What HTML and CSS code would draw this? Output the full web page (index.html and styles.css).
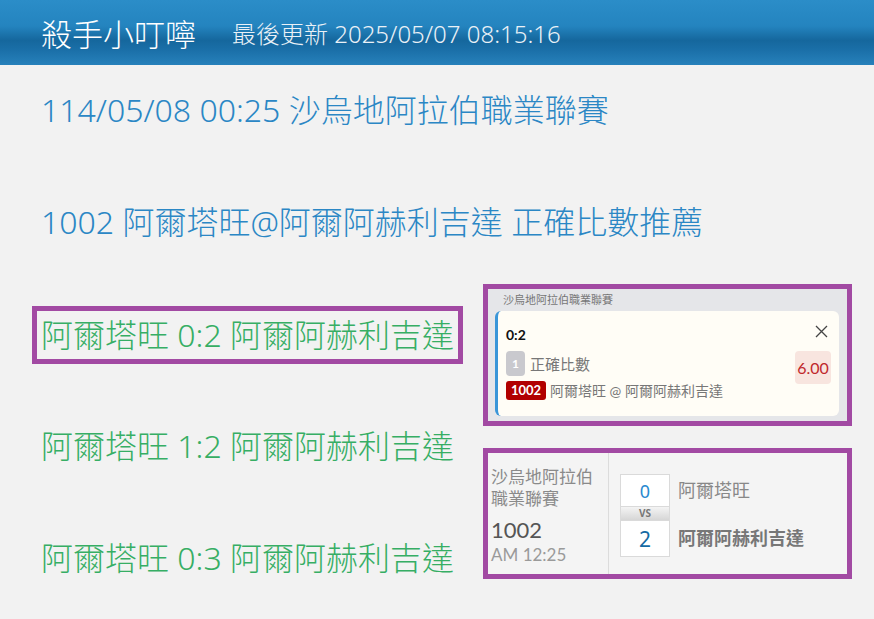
FILE: index.html
```html
<!DOCTYPE html>
<html lang="zh-Hant">
<head>
  <meta charset="UTF-8" />
  <meta name="viewport" content="width=device-width, initial-scale=1.0"/>
  <title>殺手小叮嚀</title>
  <link rel="stylesheet" href="styles.css">
</head>
<body>

<div class="topbar">
  <span class="brand">殺手小叮嚀</span>
  <span class="updated">最後更新 2025/05/07 08:15:16</span>
</div>

<div class="content">
  <div class="line blue">114/05/08 00:25 沙烏地阿拉伯職業聯賽</div>
  <div class="line blue second">1002 阿爾塔旺@阿爾阿赫利吉達 正確比數推薦</div>

  <div class="picks">
    <div class="picks-left">
      <div class="line green boxed">阿爾塔旺 0:2 阿爾阿赫利吉達</div>
      <div class="line green pick-2">阿爾塔旺 1:2 阿爾阿赫利吉達</div>
      <div class="line green pick-3">阿爾塔旺 0:3 阿爾阿赫利吉達</div>
    </div>

    <div class="picks-right">
      <div class="shot slip">
        <div class="slip-league">沙烏地阿拉伯職業聯賽</div>
        <div class="slip-card">
          <div class="slip-head">
            <span class="slip-score">0:2</span>
            <svg class="slip-close" width="13" height="13" viewBox="0 0 13 13">
              <path d="M1 1 L12 12 M12 1 L1 12" stroke="#444" stroke-width="1.3" fill="none"/>
            </svg>
          </div>
          <div class="slip-body">
            <div class="slip-info">
              <div class="slip-row">
                <span class="badge-grey">1</span>
                <span class="slip-market">正確比數</span>
              </div>
              <div class="slip-row">
                <span class="badge-red">1002</span>
                <span class="slip-teams">阿爾塔旺 @ 阿爾阿赫利吉達</span>
              </div>
            </div>
            <div class="slip-odds">6.00</div>
          </div>
        </div>
      </div>

      <div class="shot match">
        <div class="match-meta">
          <div class="match-league">沙烏地阿拉伯職業聯賽</div>
          <div class="match-no">1002</div>
          <div class="match-time">AM 12:25</div>
        </div>
        <div class="match-score">
          <div class="score-col">
            <div class="score-box">0</div>
            <div class="score-vs">VS</div>
            <div class="score-box win">2</div>
          </div>
          <div class="team-col">
            <div class="team">阿爾塔旺</div>
            <div class="team bold">阿爾阿赫利吉達</div>
          </div>
        </div>
      </div>
    </div>
  </div>
</div>

</body>
</html>
```

FILE: styles.css
```css
body {
  margin: 0;
  background: #f2f2f2;
  font-family: "Noto Sans", "Noto Sans CJK TC", sans-serif;
}

.topbar {
  height: 65px;
  display: flex;
  align-items: center;
  padding-left: 41px;
  background: linear-gradient(to bottom, #2b8dc8 0%, #2484bf 40%, #15679d 62%, #1b70a9 78%, #2781bb 100%);
  color: #fff;
}

.brand {
  font-size: 31px;
  font-weight: 300;
  margin-right: 36px;
}

.updated {
  font-size: 24px;
  font-weight: 300;
  color: #eaf1f7;
}

.content {
  padding: 25px 22px 0 41px;
}

.line {
  font-size: 32px;
  font-weight: 300;
  line-height: 40px;
  white-space: nowrap;
}

.blue {
  color: #2b87c5;
}

.second {
  margin-top: 72px;
}

.green {
  color: #36ae64;
}

.picks {
  display: flex;
  justify-content: space-between;
  align-items: flex-start;
  margin-top: 42px;
}

.picks-left {
  padding-top: 22px;
}

.boxed {
  display: inline-block;
  margin-left: -9px;
  padding: 4px 4px;
  border: 5px solid #a24aa3;
}

.pick-2 {
  margin-top: 62px;
}

.pick-3 {
  margin-top: 72px;
}

.picks-right {
  width: 369px;
}

.shot {
  border: 5px solid #a24aa3;
}

/* bet slip */
.slip {
  background: #e5e6e9;
  padding: 0 8px 5px 7px;
  font-family: Lato, "Noto Sans CJK TC", sans-serif;
}

.slip-league {
  font-size: 11px;
  line-height: 22px;
  color: #777;
  padding-left: 8px;
}

.slip-card {
  background: #fffdf6;
  border-left: 3px solid #3a96d8;
  border-radius: 6px;
  padding: 10px 8px 16px 8px;
}

.slip-head {
  display: flex;
  justify-content: space-between;
  align-items: center;
  height: 26px;
}

.slip-score {
  font-size: 14px;
  font-weight: bold;
  color: #111;
}

.slip-close {
  margin-right: 3px;
  margin-top: -6px;
}

.slip-body {
  display: flex;
  justify-content: space-between;
  align-items: flex-start;
  margin-top: 4px;
}

.slip-row {
  display: flex;
  align-items: center;
}

.slip-row + .slip-row {
  margin-top: 4px;
}

.badge-grey {
  width: 19px;
  height: 25px;
  border-radius: 4px;
  background: #c9c9ce;
  color: #fff;
  font-size: 12px;
  font-weight: bold;
  display: flex;
  align-items: center;
  justify-content: center;
}

.slip-market {
  font-size: 15px;
  color: #777;
  margin-left: 5px;
}

.badge-red {
  width: 40px;
  height: 19px;
  border-radius: 3px;
  background: #b10000;
  color: #fff;
  font-size: 13px;
  font-weight: bold;
  display: flex;
  align-items: center;
  justify-content: center;
}

.slip-teams {
  font-size: 14px;
  color: #777;
  margin-left: 4px;
}

.slip-odds {
  width: 36px;
  height: 33px;
  border-radius: 4px;
  background: #f8e5df;
  color: #c0282b;
  font-size: 16px;
  display: flex;
  align-items: center;
  justify-content: center;
}

/* match result */
.match {
  margin-top: 22px;
  height: 121px;
  display: flex;
  background: #f4f4f4;
}

.match-meta {
  width: 117px;
  padding: 13px 0 0 3px;
  border-right: 1px solid #dcdcdc;
  font-family: Lato, "Noto Sans CJK TC", sans-serif;
}

.match-league {
  font-size: 17px;
  line-height: 22px;
  color: #8a8a8a;
}

.match-no {
  font-size: 22px;
  line-height: 28px;
  color: #555;
  margin-top: 6px;
}

.match-time {
  font-size: 17px;
  line-height: 22px;
  color: #9a9a9a;
}

.match-score {
  display: flex;
  padding: 21px 0 0 11px;
}

.score-col {
  width: 50px;
}

.score-box {
  height: 31px;
  border: 1px solid #dadada;
  background: #fff;
  color: #2a8ad0;
  font-size: 18px;
  display: flex;
  align-items: center;
  justify-content: center;
}

.score-box.win {
  height: 35px;
  color: #156aa3;
  font-size: 21px;
}

.score-vs {
  height: 13px;
  background: linear-gradient(to bottom, #f4f4f4, #d6d6d6);
  border-left: 1px solid #dadada;
  border-right: 1px solid #dadada;
  color: #777;
  font-size: 10px;
  font-weight: bold;
  line-height: 13px;
  text-align: center;
}

.team-col {
  margin-left: 8px;
  display: flex;
  flex-direction: column;
}

.team {
  font-size: 18px;
  line-height: 33px;
  color: #888;
}

.team.bold {
  margin-top: 15px;
  font-weight: bold;
  color: #777;
}
```
